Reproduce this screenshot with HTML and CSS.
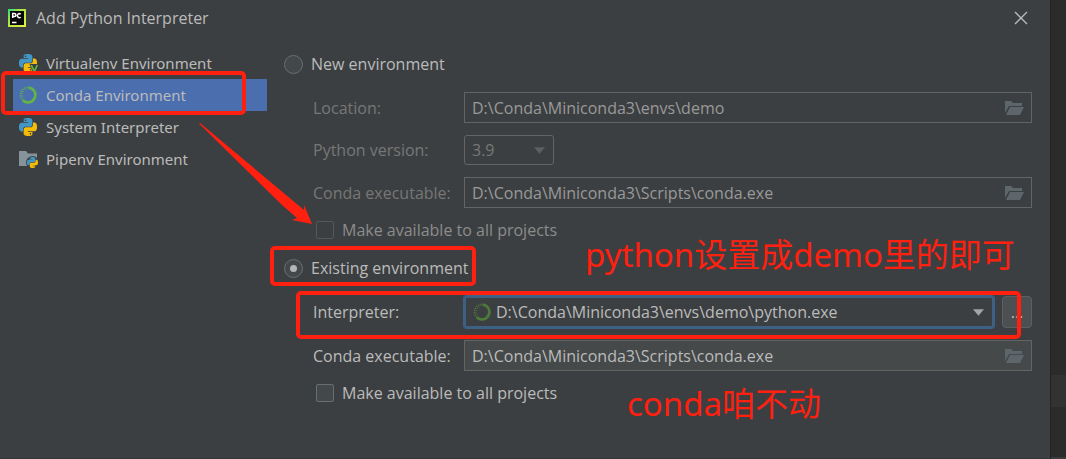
FILE: index.html
```html
<!DOCTYPE html>
<html lang="en">
<head>
<meta charset="utf-8">
<title>Add Python Interpreter</title>
<link rel="stylesheet" href="styles.css">
</head>
<body>
<svg class="defs" width="0" height="0" aria-hidden="true">
  <defs>
    <path id="snake" d="M14.25.18l.9.2.73.26.59.3.45.32.34.34.25.34.16.33.1.3.04.26.02.2-.01.13V8.5l-.05.63-.13.55-.21.46-.26.38-.3.31-.33.25-.35.19-.35.14-.33.1-.3.07-.26.04-.21.02H8.77l-.69.05-.59.14-.5.22-.41.27-.33.32-.27.35-.2.36-.15.37-.1.35-.07.32-.04.27-.02.21v3.06H3.17l-.21-.03-.28-.07-.32-.12-.35-.18-.36-.26-.36-.36-.35-.46-.32-.59-.28-.73-.21-.88-.14-1.05-.05-1.23.06-1.22.16-1.04.24-.87.32-.71.36-.57.4-.44.42-.33.42-.24.4-.16.36-.1.32-.05.24-.01h.16l.06.01h8.16v-.83H6.18l-.01-2.75-.02-.37.05-.34.11-.31.17-.28.25-.26.31-.23.38-.2.44-.18.51-.15.58-.12.64-.1.71-.06.77-.04.84-.02 1.27.05zm-6.3 1.98l-.23.33-.08.41.08.41.23.34.33.22.41.09.41-.09.33-.22.23-.34.08-.41-.08-.41-.23-.33-.33-.22-.41-.09-.41.09z"/>
    <symbol id="python" viewBox="0 0 24 24">
      <use href="#snake" fill="#4397c6"/>
      <use href="#snake" fill="#f3bc08" transform="rotate(180 12 12)"/>
    </symbol>
    <symbol id="ring" viewBox="0 0 18 18">
      <path d="M9.500 1.600A7.400 7.400 0 1 1 4 14.500" fill="none" stroke="currentColor" stroke-width="2.700"/>
      <path d="M4.100 14.400A7.400 7.400 0 0 1 9 1.400" fill="none" stroke="currentColor" stroke-width="1.500" stroke-dasharray="1.300 1"/>
      <path d="M4.900 12.500A5.600 5.600 0 0 1 8.500 3.200" fill="none" stroke="currentColor" stroke-width="1" stroke-dasharray="1 1.300"/>
    </symbol>
    <symbol id="folder" viewBox="0 0 20 14">
      <path d="M0 0h6l2 2h9v3H4L0 12z"/>
      <path d="M5 6h14l-4 8H1z"/>
    </symbol>
  </defs>
</svg>
<div class="screen">
  <main class="dialog">
    <header class="titlebar">
      <svg class="app-icon" viewBox="0 0 18 18" role="img" aria-label="PyCharm">
        <defs><linearGradient id="pc" x1="0" y1="0" x2="1" y2="1"><stop offset="0" stop-color="#20dc8c"/><stop offset=".35" stop-color="#a9e545"/><stop offset="1" stop-color="#e8ef3b"/></linearGradient></defs>
        <rect width="18" height="18" fill="url(#pc)"/>
        <rect x="2" y="2" width="14" height="14" fill="#080808"/>
        <path d="M4.700 9V4.500h1.700a1.400 1.400 0 0 1 0 2.900H4.700M12.700 5.200a2 2 0 1 0 0 3M4 13.500h4.500" fill="none" stroke="#fff" stroke-width="1.500"/>
      </svg>
      <h1 class="title">Add Python Interpreter</h1>
      <button class="close" type="button" aria-label="Close"><svg viewBox="0 0 12 12"><path d="M0 0l12 12M12 0L0 12"/></svg></button>
    </header>
    <div class="content">
      <nav class="nav">
        <a class="nav-item" href="#virtualenv">
          <svg class="nav-icon" viewBox="0 0 19 18"><use href="#python" width="18" height="18"/><path d="M10.500 10H19v8h-5.500z" fill="#3c3f41"/><path d="M12.300 11l3 6.500 3-6.500" fill="none" stroke="#62b543" stroke-width="1.700"/></svg>
          Virtualenv Environment</a>
        <a class="nav-item selected" href="#conda" aria-current="page">
          <svg class="nav-icon green"><use href="#ring" width="18" height="18"/></svg>
          Conda Environment<span class="mark mark-nav"></span></a>
        <a class="nav-item" href="#system">
          <svg class="nav-icon"><use href="#python" width="18" height="18"/></svg>
          System Interpreter</a>
        <a class="nav-item" href="#pipenv">
          <svg class="nav-icon" viewBox="0 0 19 18"><path d="M0 1h7l2 2.500h9V16H0z" fill="#87939a"/><circle cx="13.500" cy="12.500" r="6.500" fill="#3c3f41"/><use href="#python" x="8" y="7" width="11" height="11"/></svg>
          Pipenv Environment</a>
      </nav>
      <form class="form">
        <label class="radio"><input type="radio" name="env"><span>New environment</span></label>
        <div class="group muted">
          <div class="row">
            <label for="loc">Location:</label>
            <div class="field"><input id="loc" type="text" value="D:\Conda\Miniconda3\envs\demo" readonly><button type="button" class="browse" aria-label="Browse"><svg><use href="#folder"/></svg></button></div>
          </div>
          <div class="row">
            <label for="ver">Python version:</label>
            <div class="combo version"><select id="ver"><option>3.9</option></select><svg class="arrow" viewBox="0 0 12 7"><path d="M0 0h12L6 7z"/></svg></div>
          </div>
          <div class="row">
            <label for="exe1">Conda executable:</label>
            <div class="field"><input id="exe1" type="text" value="D:\Conda\Miniconda3\Scripts\conda.exe" readonly><button type="button" class="browse" aria-label="Browse"><svg><use href="#folder"/></svg></button></div>
          </div>
          <label class="check"><input type="checkbox"><span>Make available to all projects</span></label>
        </div>
        <label class="radio"><input type="radio" name="env" checked><span>Existing environment</span><span class="mark mark-radio"></span></label>
        <div class="group">
          <div class="row">
            <label for="interp">Interpreter:</label>
            <div class="pair">
              <div class="combo focused"><svg class="lead"><use href="#ring"/></svg><select id="interp"><option>D:\Conda\Miniconda3\envs\demo\python.exe</option></select><svg class="arrow" viewBox="0 0 12 7"><path d="M0 0h12L6 7z"/></svg></div>
              <button type="button" class="more" aria-label="More">...</button>
            </div>
            <span class="mark mark-row"></span>
          </div>
          <div class="row">
            <label for="exe2">Conda executable:</label>
            <div class="field filled"><input id="exe2" type="text" value="D:\Conda\Miniconda3\Scripts\conda.exe" readonly><button type="button" class="browse" aria-label="Browse"><svg><use href="#folder"/></svg></button></div>
          </div>
          <label class="check"><input type="checkbox"><span>Make available to all projects</span></label>
        </div>
      </form>
    </div>
  </main>
  <aside class="editor"><div class="editor-line"></div><div class="editor-foot"></div></aside>
  <svg class="pointer" viewBox="0 0 114 102" aria-hidden="true"><path d="M0 0.500L1 0L105 87V82L113 101L93 97L98 95L83 82z"/></svg>
  <p class="note note-top">python设置成demo里的即可</p>
  <p class="note note-bottom">conda咱不动</p>
</div>
</body>
</html>
```

FILE: styles.css
```css
* { box-sizing: border-box; }

body {
  margin: 0;
  background: #2b2b2b;
  color: #bbbbbb;
  font: 16px/20px "Open Sans", "Noto Sans CJK SC", sans-serif;
}

input, select, button { font: inherit; color: inherit; margin: 0; }
svg { display: block; flex: none; }
.defs { position: absolute; }

.screen { position: relative; display: flex; min-height: 100vh; }
.dialog { flex: 1; background: #3c3f41; border-bottom: 1px solid #35373a; }

.titlebar { display: flex; align-items: center; gap: 10px; height: 36px; padding: 0 23px 0 8px; }
.app-icon { width: 18px; height: 18px; }
.title { flex: 1; margin: 0; font-size: 16px; font-weight: 400; }
.close { padding: 0; border: 0; background: none; }
.close svg { width: 12px; height: 12px; overflow: visible; fill: none; stroke: #bbbbbb; stroke-width: 1.3; }

.content { display: grid; grid-template-columns: 254px 1fr; gap: 17px; padding: 0 18px 0 13px; }

.nav { padding-top: 11px; font-family: "Noto Sans", sans-serif; font-size: 15px; }
.nav-item {
  position: relative;
  display: flex;
  align-items: center;
  gap: 8px;
  height: 32px;
  padding-left: 6px;
  color: inherit;
  text-decoration: none;
}
.nav-item.selected { background: #4b6eaf; }
.nav-icon { width: 19px; height: 18px; }
.green { color: #62b543; }

.form { display: flex; flex-direction: column; gap: 18px; padding: 18px 0 16px; }
.group { display: flex; flex-direction: column; gap: 12px; }
.radio { position: relative; display: flex; align-items: center; align-self: flex-start; gap: 8px; height: 20px; }
.check { display: flex; align-items: center; align-self: flex-start; gap: 8px; height: 20px; margin-left: 32px; }

.radio input, .check input {
  appearance: none;
  display: grid;
  place-items: center;
  width: 19px;
  height: 19px;
  border: 1px solid #6b6e70;
  background: #43494a;
}
.radio input { border-radius: 50%; }
.radio input:checked::before { content: ""; width: 7px; height: 7px; border-radius: 50%; background: #b4b4b4; }
.check input { width: 18px; height: 18px; border-radius: 2px; }

.row {
  position: relative;
  display: grid;
  grid-template-columns: 151px 1fr;
  align-items: center;
  margin-left: 29px;
}

.field { display: flex; align-items: center; height: 31px; border: 1px solid #646464; }
.field input { flex: 1; min-width: 0; height: 20px; padding: 0 7px; border: 0; background: none; outline: 0; }
.filled { background: #45494a; }
.browse { padding: 0 6px 0 0; border: 0; background: none; }
.browse svg { width: 20px; height: 14px; fill: #5d676b; }

.combo { position: relative; display: flex; align-items: center; flex: 1; height: 30px; border: 1px solid #646464; border-radius: 3px; }
.combo select { appearance: none; flex: 1; min-width: 0; padding: 0 30px 0 7px; border: 0; background: none; outline: 0; }
.combo option { background: #3c3f41; }
.arrow { position: absolute; right: 8px; width: 11px; height: 7px; fill: #a4a4a4; pointer-events: none; }
.version { width: 90px; }
.focused { height: 32px; border: 2px solid #3d6185; box-shadow: 0 0 0 1px #3d6185; }
.lead { width: 18px; height: 18px; margin-left: 7px; color: #4d7a3a; }
.focused select { padding-left: 5px; }

.pair { display: flex; gap: 8px; }
.more { width: 30px; padding: 0; border: 1px solid #5e6060; border-radius: 4px; background: #4c5052; }

.muted { color: #777777; }
.muted .field { color: #999999; }
.muted .check { color: #8c8c8c; }
.muted .check input { border-color: #55585a; background: none; }
.muted .arrow { fill: #5c5e60; }

.editor { display: flex; flex-direction: column; justify-content: flex-end; width: 16px; border-left: 1px solid #232323; }
.editor-line { height: 32px; background: #323232; }
.editor-foot { height: 52px; border-bottom: 2px solid #393b3c; }

/* Red annotations drawn over the dialog */
.mark { position: absolute; border: 4px solid #ff2010; border-radius: 5px; pointer-events: none; }
.mark-nav { inset: -8px 21px -4px -12px; }
.mark-radio { inset: -12px -8px -8px -14px; }
.mark-row { inset: -5px 11px -11px -17px; }
.pointer { position: absolute; left: 199px; top: 123px; width: 114px; height: 102px; fill: #ff2010; pointer-events: none; }
.note { position: absolute; margin: 0; color: #ff2010; font-family: "Noto Sans", "Noto Sans CJK SC", sans-serif; font-size: 33px; line-height: 44px; white-space: nowrap; pointer-events: none; }
.note-top { left: 585px; top: 233px; }
.note-bottom { left: 627px; top: 382px; }
```
